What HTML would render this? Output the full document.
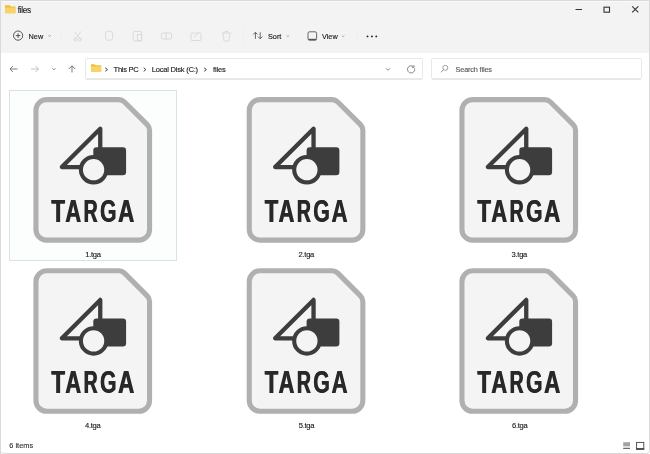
<!DOCTYPE html>
<html><head><meta charset="utf-8">
<style>
*{margin:0;padding:0;box-sizing:border-box}
html,body{width:650px;height:454px;overflow:hidden;background:#fff}
body{position:relative;font-family:"Liberation Sans",sans-serif;color:#1a1a1a}
.abs{position:absolute}
#top{position:absolute;left:0;top:0;width:650px;height:53px;background:#f3f3f3}
.t{position:absolute;white-space:nowrap;line-height:1;transform:translateZ(0);-webkit-text-stroke:0.13px currentColor}
</style></head>
<body>
<div id="top"></div>
<svg class="abs" style="left:0;top:0;transform:translateZ(0)" width="650" height="454" viewBox="0 0 650 454">
  <defs>
    <g id="icon">
      <path d="M46.45 99.6 H118.84 A8 8 0 0 1 124.49 101.94 L147.21 124.66 A8 8 0 0 1 149.55 130.31 V229.4 A10.7 10.7 0 0 1 138.85 240.1 H46.65 A10.7 10.7 0 0 1 35.95 229.4 V110.3 A10.7 10.7 0 0 1 46.65 99.6 Z"
        fill="#f4f4f4" stroke="#b0b0b0" stroke-width="5.1" stroke-linejoin="round"/>
      <path d="M100.25 128.7 V167.1 H61.85 Z" fill="none" stroke="#3d3d3d" stroke-width="4.3" stroke-linejoin="round"/>
      <rect x="93.3" y="147.2" width="32.8" height="28" rx="3.2" fill="#3d3d3d"/>
      <circle cx="93.6" cy="169.7" r="12.7" fill="#f4f4f4" stroke="#3d3d3d" stroke-width="4.1"/>
      <g id="targa" style="will-change:transform" font-family="Liberation Sans" font-weight="bold" font-size="31" fill="#282828"><text transform="translate(51.06 221.5) scale(0.717 1)">T</text><text transform="translate(65.06 221.5) scale(0.702 1)">A</text><text transform="translate(83.30 221.5) scale(0.626 1)">R</text><text transform="translate(99.63 221.5) scale(0.688 1)">G</text><text transform="translate(117.84 221.5) scale(0.721 1)">A</text></g><use href="#targa" x="0.6" y="0"/>
    </g>
  </defs>
  <!-- window borders -->
  <path d="M0.5 455 V0.5 H649.5 V450.5 Q649.5 453.5 646.5 453.5 H3.5 Q0.5 453.5 0.5 450.5" fill="none" stroke="#dadada" stroke-width="1"/>
  <rect x="1" y="1" width="648" height="1" fill="#f9f9f9"/>
  <!-- title folder -->
  <path d="M5 5.2 H9.5 L11 6.6 H15.4 V13.2 H5 Z" fill="#eebd3a"/>
  <rect x="5" y="7.6" width="10.4" height="5.6" fill="#f8d466"/>
  <!-- window controls -->
  <rect x="575.5" y="9" width="6.5" height="1" fill="#333"/>
  <rect x="604" y="7.2" width="5.5" height="5" fill="none" stroke="#333" stroke-width="1.1"/>
  <path d="M632.2 6.4 L638.3 12.3 M638.3 6.4 L632.2 12.3" stroke="#333" stroke-width="1.1"/>
  <!-- New -->
  <circle cx="18.1" cy="35.6" r="4.6" fill="none" stroke="#444" stroke-width="0.9"/>
  <path d="M18.1 33.3 V37.9 M15.8 35.6 H20.4" stroke="#444" stroke-width="0.9"/>
  <path d="M48.3 35.3 L49.6 36.5 L50.9 35.3" fill="none" stroke="#999" stroke-width="0.8"/>
  <!-- disabled icons -->
  <g fill="none" stroke="#d8d8d8" stroke-width="0.9">
    <path d="M74.5 31.5 L81 40 M81 31.5 L74.5 40"/><circle cx="75.5" cy="39.5" r="1.5"/><circle cx="80" cy="39.5" r="1.5"/>
    <rect x="105.5" y="31.2" width="7" height="9" rx="2"/>
    <rect x="133.2" y="31.5" width="8.5" height="9.5" rx="1.5"/><rect x="137.5" y="34.5" width="4" height="6"/>
    <rect x="161.5" y="33" width="10" height="6" rx="1"/><path d="M166 31.5 V40.5"/>
    <rect x="191" y="33" width="10" height="7.5" rx="1"/><path d="M194 37 L199 32.5"/>
    <path d="M222 33 H231 M223 33 L224 41 H229 L230 33 M225 33 V31.5 H228 V33"/>
  </g>
  <rect x="61" y="29" width="1" height="14" fill="#eeeeee"/>
  <rect x="243" y="29" width="1" height="14" fill="#eeeeee"/>
  <rect x="357" y="29" width="1" height="14" fill="#eeeeee"/>
  <!-- Sort icon -->
  <path d="M255.4 38.8 V32.3 M253.2 34.5 L255.4 32.3 L257.6 34.5 M260.2 32.3 V38.8 M258 36.6 L260.2 38.8 L262.4 36.6" fill="none" stroke="#555" stroke-width="0.9"/>
  <path d="M286.6 35.5 L287.9 36.7 L289.2 35.5" fill="none" stroke="#999" stroke-width="0.8"/>
  <!-- View icon -->
  <rect x="308" y="31.8" width="8.6" height="8.4" rx="1.5" fill="none" stroke="#555" stroke-width="0.9"/>
  <rect x="308.5" y="38.8" width="7.6" height="1.3" fill="#555"/>
  <path d="M341.8 35.5 L343.1 36.7 L344.4 35.5" fill="none" stroke="#999" stroke-width="0.8"/>
  <!-- dots -->
  <circle cx="367.5" cy="36.4" r="0.95" fill="#222"/><circle cx="371.9" cy="36.4" r="0.95" fill="#222"/><circle cx="376.3" cy="36.4" r="0.95" fill="#222"/>
  <!-- nav -->
  <path d="M17.5 69 H10 M13 66 L10 69 L13 72" fill="none" stroke="#666" stroke-width="0.85"/>
  <path d="M31 69 H38.5 M35.5 66 L38.5 69 L35.5 72" fill="none" stroke="#bbb" stroke-width="0.9"/>
  <path d="M52.3 68.2 L53.9 69.8 L55.5 68.2" fill="none" stroke="#666" stroke-width="0.8"/>
  <path d="M72 72.5 V65.8 M68.8 69 L72 65.8 L75.2 69" fill="none" stroke="#666" stroke-width="0.85"/>
  <!-- address box -->
  <rect x="85.5" y="58.5" width="337" height="20.5" rx="1.5" fill="#fff" stroke="#e8e8e8" stroke-width="1"/><rect x="86" y="78.5" width="336" height="1" fill="#dedede"/>
  <path d="M91 64.2 H94.5 L95.8 65.2 H101.2 V71.8 H91 Z" fill="#eebd3a"/>
  <rect x="91" y="66.4" width="10.2" height="5.4" fill="#f8d466"/>
  <path d="M105.3 67.9 L107.5 69.6 L105.3 71.3" fill="none" stroke="#444" stroke-width="1"/>
  <path d="M143.7 67.9 L145.9 69.6 L143.7 71.3" fill="none" stroke="#444" stroke-width="1"/>
  <path d="M204.2 67.9 L206.4 69.6 L204.2 71.3" fill="none" stroke="#444" stroke-width="1"/>
  <path d="M386 68.3 L388 70.3 L390 68.3" fill="none" stroke="#666" stroke-width="0.8"/>
  <path d="M414.6 68.5 A3.6 3.6 0 1 1 413.4 66.6 M414 65.2 V67.3 H411.9" fill="none" stroke="#777" stroke-width="0.9"/>
  <!-- search box -->
  <rect x="431.5" y="58.5" width="210" height="20.5" rx="1.5" fill="#fff" stroke="#e8e8e8" stroke-width="1"/><rect x="432" y="78.5" width="209" height="1" fill="#dedede"/>
  <circle cx="445.3" cy="67.8" r="2.5" fill="none" stroke="#888" stroke-width="0.8"/>
  <path d="M443.5 69.6 L441 72.3" stroke="#888" stroke-width="0.9"/>
  <!-- selection -->
  <rect x="9.5" y="90.5" width="167" height="170" fill="#fcfdfd" stroke="#d9e3e3" stroke-width="1"/>
  <use href="#icon"/>
  <use href="#icon" transform="translate(213.3,0)"/>
  <use href="#icon" transform="translate(426,0)"/>
  <use href="#icon" transform="translate(0,171.2)"/>
  <use href="#icon" transform="translate(213.3,171.2)"/>
  <use href="#icon" transform="translate(426,171.2)"/>
  <!-- status icons -->
  <rect x="623.2" y="442.2" width="6.8" height="3.8" fill="#a3a3a3"/>
  <rect x="623.2" y="446.2" width="6.8" height="1" fill="#d0d0d0"/>
  <rect x="623.2" y="447.8" width="6.8" height="1.2" fill="#6a6a6a"/>
  <rect x="636.6" y="442.4" width="7.2" height="6.8" fill="none" stroke="#444" stroke-width="0.9"/>
  <rect x="636.2" y="448.1" width="8" height="1.6" fill="#444"/>
</svg>
<div class="t" style="left:17.7px;top:6.5px;font-size:8.2px;letter-spacing:-0.3px">files</div>
<div class="t" style="left:28.6px;top:32.7px;font-size:7.3px">New</div>
<div class="t" style="left:268px;top:32.6px;font-size:7.3px">Sort</div>
<div class="t" style="left:322px;top:33px;font-size:7.3px">View</div>
<div class="t" style="left:113.6px;top:65.8px;font-size:7.6px;letter-spacing:-0.3px">This PC</div>
<div class="t" style="left:151.8px;top:65.8px;font-size:7.6px;letter-spacing:-0.25px">Local Disk (C:)</div>
<div class="t" style="left:213px;top:65.8px;font-size:7.6px;letter-spacing:-0.2px">files</div>
<div class="t" style="left:455.5px;top:65.5px;font-size:7.3px;letter-spacing:-0.15px;color:#5a5a5a">Search files</div>
<div class="t" style="left:85.3px;top:250.8px;font-size:7.6px;letter-spacing:-0.3px">1.tga</div>
<div class="t" style="left:298.6px;top:250.8px;font-size:7.6px;letter-spacing:-0.3px">2.tga</div>
<div class="t" style="left:511.6px;top:250.8px;font-size:7.6px;letter-spacing:-0.3px">3.tga</div>
<div class="t" style="left:85px;top:422px;font-size:7.6px;letter-spacing:-0.3px">4.tga</div>
<div class="t" style="left:298.8px;top:422px;font-size:7.6px;letter-spacing:-0.3px">5.tga</div>
<div class="t" style="left:512px;top:422px;font-size:7.6px;letter-spacing:-0.3px">6.tga</div>
<div class="t" style="left:9.3px;top:442.4px;font-size:7.4px;color:#333">6 items</div>
</body></html>
